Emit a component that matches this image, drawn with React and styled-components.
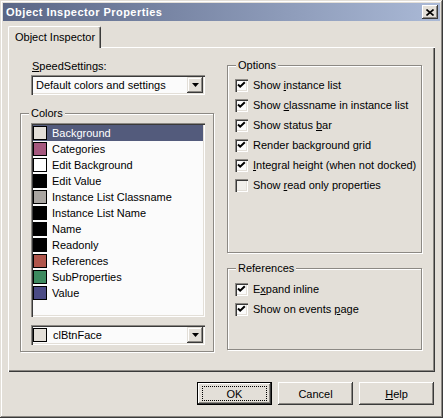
import React from "react";
import styled, { createGlobalStyle } from "styled-components";

const face = "#e3dfd8";
const shadow = "#8c8984";
const dark = "#3a3a3a";
const light = "#ffffff";

const GlobalStyle = createGlobalStyle`
  html, body {
    margin: 0;
    padding: 0;
    background: ${face};
  }
  body {
    font-family: "Liberation Sans", Arial, sans-serif;
    font-size: 11px;
    color: #000;
  }
`;

const Window = styled.div`
  width: 443px;
  height: 418px;
  box-sizing: border-box;
  padding: 3px;
  display: flex;
  flex-direction: column;
  background: ${face};
  box-shadow: inset -1px -1px ${dark}, inset 1px 1px ${face},
    inset -2px -2px ${shadow}, inset 2px 2px ${light};
`;

const TitleBar = styled.div`
  flex: none;
  height: 18px;
  display: flex;
  align-items: center;
  justify-content: space-between;
  padding: 0 2px 0 3px;
  background: linear-gradient(to right, #5a6686, #aab9d6);
`;

const Title = styled.span`
  color: #fff;
  font-weight: bold;
  font-size: 11px;
  letter-spacing: 0.45px;
`;

const CloseButton = styled.button`
  width: 16px;
  height: 14px;
  padding: 0;
  border: none;
  display: flex;
  align-items: center;
  justify-content: center;
  background: ${face};
  box-shadow: inset -1px -1px ${dark}, inset 1px 1px ${light},
    inset -2px -2px ${shadow};
`;

const Body = styled.div`
  flex: 1;
  padding: 5px 5px 0 5px;
  display: flex;
  flex-direction: column;
`;

const TabStrip = styled.div`
  height: 21px;
  display: flex;
  align-items: flex-end;
`;

const Tab = styled.div`
  position: relative;
  z-index: 1;
  height: 22px;
  margin-bottom: -1px;
  box-sizing: border-box;
  padding: 4px 5px 0 6px;
  background: ${face};
  border-top: 1px solid ${light};
  border-left: 1px solid ${light};
  border-right: 1px solid ${dark};
  border-radius: 2px 2px 0 0;
  box-shadow: inset -1px 0 ${shadow};
`;

const Panel = styled.div`
  height: 325px;
  box-sizing: border-box;
  padding: 0 0 0 12px;
  display: grid;
  grid-template-columns: 194px 195px;
  column-gap: 13px;
  align-items: start;
  box-shadow: inset 1px 1px ${light}, inset -1px -1px ${dark},
    inset -2px -2px ${shadow};
`;

const Column = styled.div`
  display: flex;
  flex-direction: column;
`;

const FieldLabel = styled.label`
  margin: 13px 0 0 12px;
  line-height: 13px;
`;

const sunken = `
  box-sizing: border-box;
  background: #fbfbfb;
  box-shadow: inset 1px 1px ${shadow}, inset 2px 2px ${dark},
    inset -1px -1px ${light}, inset -2px -2px ${face};
`;

const Combo = styled.div`
  ${sunken}
  width: 174px;
  height: 20px;
  margin: ${(p) => p.$margin || "0"};
  padding: 2px;
  display: flex;
  align-items: center;
`;

const ComboText = styled.span`
  flex: 1;
  padding-left: ${(p) => p.$indent || "3px"};
  line-height: 16px;
  white-space: nowrap;
`;

const DropButton = styled.div`
  width: 16px;
  height: 16px;
  display: flex;
  align-items: center;
  justify-content: center;
  background: ${face};
  box-shadow: inset -1px -1px ${dark}, inset 1px 1px ${face},
    inset -2px -2px ${shadow}, inset 2px 2px ${light};
`;

const Group = styled.fieldset`
  margin: ${(p) => p.$top} 0 0 0;
  height: ${(p) => p.$height};
  box-sizing: border-box;
  min-width: 0;
  padding: ${(p) => p.$padding};
  border: 1px solid ${shadow};
  box-shadow: inset 1px 1px ${light}, 1px 1px ${light};
`;

const Legend = styled.legend`
  padding: 0 2px;
  margin-left: ${(p) => p.$offset || "0"};
  line-height: 13px;
  background: ${face};
`;

const ListBox = styled.div`
  ${sunken}
  width: 174px;
  height: 194px;
  padding: 2px;
`;

const ListItem = styled.div`
  height: 16px;
  display: flex;
  align-items: center;
  gap: 5px;
  background: ${(p) => (p.$selected ? "#535b7c" : "transparent")};
  color: ${(p) => (p.$selected ? "#fff" : "#000")};
`;

const Swatch = styled.span`
  flex: none;
  width: 14px;
  height: 14px;
  box-sizing: border-box;
  border: 1px solid #000;
  background: ${(p) => p.$color};
`;

const CheckRow = styled.div`
  height: 20px;
  display: flex;
  align-items: center;
  gap: 5px;
  white-space: nowrap;
`;

const CheckBox = styled.span`
  ${sunken}
  flex: none;
  width: 13px;
  height: 13px;
  display: flex;
  align-items: center;
  justify-content: center;
  background: ${(p) => (p.$checked ? "#fbfbfb" : "#f1efeb")};
`;

const ButtonRow = styled.div`
  display: flex;
  justify-content: flex-end;
  gap: 6px;
  margin-top: 10px;
  padding-right: 1px;
`;

const Button = styled.button`
  width: 75px;
  height: 23px;
  padding: 0;
  box-sizing: border-box;
  font: inherit;
  color: #000;
  background: ${face};
  border: ${(p) => (p.$default ? "1px solid #000" : "none")};
  box-shadow: inset -1px -1px ${dark}, inset 1px 1px ${light},
    inset -2px -2px ${shadow}, inset 2px 2px ${face};
  display: flex;
  align-items: center;
  justify-content: center;
`;

const FocusRect = styled.span`
  width: 63px;
  height: 13px;
  border: 1px dotted #000;
  display: flex;
  align-items: center;
  justify-content: center;
`;

const colors = [
  ["Background", face],
  ["Categories", "#a5587e"],
  ["Edit Background", "#ffffff"],
  ["Edit Value", "#000000"],
  ["Instance List Classname", "#a9a5a1"],
  ["Instance List Name", "#000000"],
  ["Name", "#000000"],
  ["Readonly", "#000000"],
  ["References", "#b0564b"],
  ["SubProperties", "#3d8a5f"],
  ["Value", "#4b4b85"],
];

const Arrow = () => (
  <svg width="7" height="4" viewBox="0 0 7 4">
    <path d="M0 0h7L3.5 4z" fill="#000" />
  </svg>
);

const Check = () => (
  <svg width="9" height="9" viewBox="0 0 9 9">
    <path d="M1 3.5l2.2 2.2L7.8 1.2" stroke="#000" strokeWidth="2" fill="none" />
  </svg>
);

const Option = ({ checked = true, children }) => (
  <CheckRow>
    <CheckBox $checked={checked}>{checked && <Check />}</CheckBox>
    <span>{children}</span>
  </CheckRow>
);

export default function App() {
  return (
    <>
      <GlobalStyle />
      <Window>
        <TitleBar>
          <Title>Object Inspector Properties</Title>
          <CloseButton aria-label="Close">
            <svg width="8" height="7" viewBox="0 0 8 7">
              <path d="M0.5 0.5l7 6M7.5 0.5l-7 6" stroke="#000" strokeWidth="1.6" />
            </svg>
          </CloseButton>
        </TitleBar>
        <Body>
          <TabStrip>
            <Tab>Object Inspector</Tab>
          </TabStrip>
          <Panel>
            <Column>
              <FieldLabel>
                <u>S</u>peedSettings:
              </FieldLabel>
              <Combo $margin="2px 0 0 11px">
                <ComboText>Default colors and settings</ComboText>
                <DropButton>
                  <Arrow />
                </DropButton>
              </Combo>
              <Group $top="12px" $height="245px" $padding="3px 9px 0 10px">
                <Legend $offset="-2px">Colors</Legend>
                <ListBox>
                  {colors.map(([name, color], i) => (
                    <ListItem key={name} $selected={i === 0}>
                      <Swatch $color={color} />
                      {name}
                    </ListItem>
                  ))}
                </ListBox>
                <Combo $margin="8px 0 0 0">
                  <Swatch $color={face} />
                  <ComboText $indent="6px">clBtnFace</ComboText>
                  <DropButton>
                    <Arrow />
                  </DropButton>
                </Combo>
              </Group>
            </Column>
            <Column>
              <Group $top="12px" $height="194px" $padding="3px 7px 0 7px">
                <Legend $offset="1px">Options</Legend>
                <Option>
                  Show <u>i</u>nstance list
                </Option>
                <Option>
                  Show <u>c</u>lassname in instance list
                </Option>
                <Option>
                  Show status <u>b</u>ar
                </Option>
                <Option>Render background grid</Option>
                <Option>
                  <u>I</u>ntegral height (when not docked)
                </Option>
                <Option checked={false}>
                  Show <u>r</u>ead only properties
                </Option>
              </Group>
              <Group $top="9px" $height="88px" $padding="4px 7px 0 7px">
                <Legend $offset="1px">References</Legend>
                <Option>
                  E<u>x</u>pand inline
                </Option>
                <Option>
                  Show on events <u>p</u>age
                </Option>
              </Group>
            </Column>
          </Panel>
          <ButtonRow>
            <Button $default>
              <FocusRect>OK</FocusRect>
            </Button>
            <Button>Cancel</Button>
            <Button>
              <span>
                <u>H</u>elp
              </span>
            </Button>
          </ButtonRow>
        </Body>
      </Window>
    </>
  );
}
